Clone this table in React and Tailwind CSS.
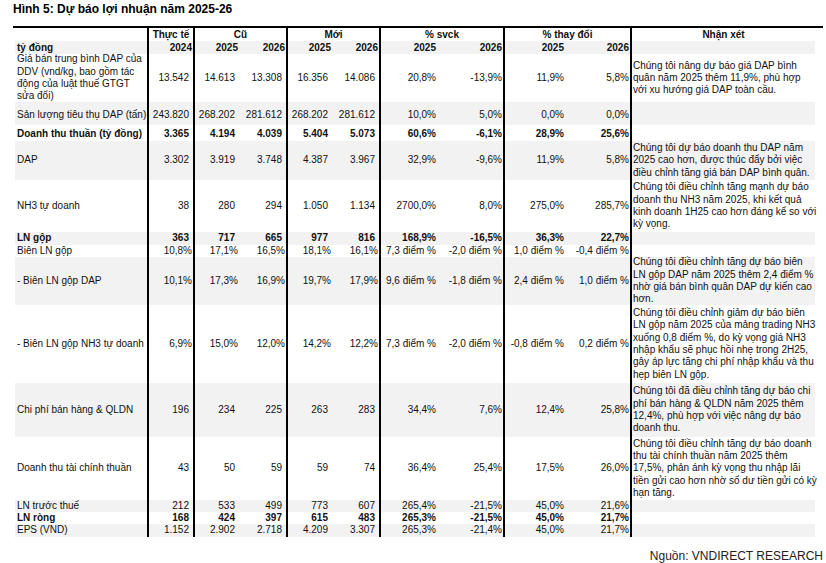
import React from "react";

const cols =
  "grid grid-cols-[132px_46px_46px_47px_46px_47px_58px_66px_62px_65px_185px]";

// columns that start with a thick rule
const ruled = [0, 1, 3, 5, 7];

const rows = [
  {
    label: ["Giá bán trung bình DAP của", "DDV (vnd/kg, bao gồm tác", "động của luật thuế GTGT", "sửa đổi)"],
    v: ["13.542", "14.613", "13.308", "16.356", "14.086", "20,8%", "-13,9%", "11,9%", "5,8%"],
    c: ["Chúng tôi nâng dự báo giá DAP bình", "quân năm 2025 thêm 11,9%, phù hợp", "với xu hướng giá DAP toàn cầu."],
    h: "h-[48px]",
  },
  {
    label: ["Sản lượng tiêu thụ DAP (tấn)"],
    v: ["243.820", "268.202", "281.612", "268.202", "281.612", "10,0%", "5,0%", "0,0%", "0,0%"],
    h: "h-[23px] pt-[4px]",
    gray: true,
  },
  {
    label: ["Doanh thu thuần (tỷ đồng)"],
    v: ["3.365", "4.194", "4.039", "5.404", "5.073", "60,6%", "-6,1%", "28,9%", "25,6%"],
    h: "h-[16px] pt-[3px]",
    bold: true,
  },
  {
    label: ["DAP"],
    v: ["3.302", "3.919", "3.748", "4.387", "3.967", "32,9%", "-9,6%", "11,9%", "5,8%"],
    c: ["Chúng tôi dự báo doanh thu DAP năm", "2025 cao hơn, được thúc đẩy bởi việc", "điều chỉnh tăng giá bán DAP bình quân."],
    h: "h-[39px]",
    gray: true,
  },
  {
    label: ["NH3 tự doanh"],
    v: ["38", "280", "294", "1.050", "1.134", "2700,0%", "8,0%", "275,0%", "285,7%"],
    c: ["Chúng tôi điều chỉnh tăng mạnh dự báo", "doanh thu NH3 năm 2025, khi kết quả", "kinh doanh 1H25 cao hơn đáng kể so với", "kỳ vọng."],
    h: "h-[52px]",
  },
  {
    label: ["LN gộp"],
    v: ["363", "717", "665", "977", "816", "168,9%", "-16,5%", "36,3%", "22,7%"],
    h: "h-[13px]",
    gray: true,
    bold: true,
  },
  {
    label: ["Biên LN gộp"],
    v: ["10,8%", "17,1%", "16,5%", "18,1%", "16,1%", "7,3 điểm %", "-2,0 điểm %", "1,0 điểm %", "-0,4 điểm %"],
    h: "h-[12px]",
  },
  {
    label: ["- Biên LN gộp DAP"],
    v: ["10,1%", "17,3%", "16,9%", "19,7%", "17,9%", "9,6 điểm %", "-1,8 điểm %", "2,4 điểm %", "1,0 điểm %"],
    c: ["Chúng tôi điều chỉnh tăng dự báo biên", "LN gộp DAP năm 2025 thêm 2,4 điểm %", "nhờ giá bán bình quân DAP dự kiến cao", "hơn."],
    h: "h-[48px]",
    gray: true,
  },
  {
    label: ["- Biên LN gộp NH3 tự doanh"],
    v: ["6,9%", "15,0%", "12,0%", "14,2%", "12,2%", "7,3 điểm %", "-2,0 điểm %", "-0,8 điểm %", "0,2 điểm %"],
    c: [
      "Chúng tôi điều chỉnh giảm dự báo biên",
      "LN gộp năm 2025 của mảng trading NH3",
      "xuống 0,8 điểm %, do kỳ vọng giá NH3",
      "nhập khẩu sẽ phục hồi nhẹ trong 2H25,",
      "gây áp lực tăng chi phí nhập khẩu và thu",
      "hẹp biên LN gộp.",
    ],
    h: "h-[78px]",
  },
  {
    label: ["Chi phí bán hàng & QLDN"],
    v: ["196", "234", "225", "263", "283", "34,4%", "7,6%", "12,4%", "25,8%"],
    c: ["Chúng tôi đã điều chỉnh tăng dự báo chi", "phí bán hàng & QLDN năm 2025 thêm", "12,4%, phù hợp với việc nâng dự báo", "doanh thu."],
    h: "h-[54px]",
    gray: true,
  },
  {
    label: ["Doanh thu tài chính thuần"],
    v: ["43", "50", "59", "59", "74", "36,4%", "25,4%", "17,5%", "26,0%"],
    c: ["Chúng tôi điều chỉnh tăng dự báo doanh", "thu tài chính thuần năm 2025 thêm", "17,5%, phản ánh kỳ vọng thu nhập lãi", "tiền gửi cao hơn nhờ số dư tiền gửi có kỳ", "hạn tăng."],
    h: "h-[63px]",
  },
  {
    label: ["LN trước thuế"],
    v: ["212", "533", "499", "773", "607", "265,4%", "-21,5%", "45,0%", "21,6%"],
    h: "h-[12px]",
    gray: true,
  },
  {
    label: ["LN ròng"],
    v: ["168", "424", "397", "615", "483", "265,3%", "-21,5%", "45,0%", "21,7%"],
    h: "h-[12px]",
    bold: true,
  },
  {
    label: ["EPS (VND)"],
    v: ["1.152", "2.902", "2.718", "4.209", "3.307", "265,3%", "-21,4%", "45,0%", "21,7%"],
    h: "h-[13px]",
    gray: true,
  },
];

function Lines({ items }) {
  return (
    <div className="leading-[12.3px]">
      {items.map((t, i) => (
        <div key={i} className="whitespace-nowrap">
          {t}
        </div>
      ))}
    </div>
  );
}

function Row({ row }) {
  return (
    <div className={`${cols} ${row.gray ? "bg-[#f2f2f2]" : ""} ${row.bold ? "font-bold" : ""}`}>
      <div className={`flex items-center pl-[2px] ${row.h}`}>
        <Lines items={row.label} />
      </div>
      {row.v.map((val, i) => (
        <div
          key={i}
          className={`flex items-center justify-end whitespace-nowrap leading-[12.3px] ${row.h} ${
            ruled.includes(i) ? "border-l-2 border-black" : ""
          } ${val.endsWith("%") ? "pr-[1px]" : "pr-[4px]"}`}
        >
          {val}
        </div>
      ))}
      <div className={`flex items-center border-l-2 border-black pl-[1px] ${row.h}`}>
        {row.c && <Lines items={row.c} />}
      </div>
    </div>
  );
}

export default function App() {
  return (
    <div className="min-h-[563px] w-[826px] bg-white pt-[2px] text-[10px] text-[#111] font-['Liberation_Sans',Arial,sans-serif]">
      <div className="h-[14px] pl-[13px] text-[12px] font-bold leading-[14px] text-black">
        Hình 5: Dự báo lợi nhuận năm 2025-26
      </div>
      <div className="ml-[13px] mt-[10px] h-[2px] w-[810px] bg-black" />

      <div className="ml-[15px] w-[800px]">
        {/* header */}
        <div className={`${cols} font-bold leading-[13px]`}>
          <div className="h-[13px]" />
          <div className="flex h-[13px] items-center justify-center border-l-2 border-black">Thực tế</div>
          <div className="col-span-2 flex h-[13px] items-center justify-center border-l-2 border-black">Cũ</div>
          <div className="col-span-2 flex h-[13px] items-center justify-center border-l-2 border-black">Mới</div>
          <div className="col-span-2 flex h-[13px] items-center justify-center border-l-2 border-black">% svck</div>
          <div className="col-span-2 flex h-[13px] items-center justify-center border-l-2 border-black">% thay đổi</div>
          <div className="flex h-[13px] items-center justify-center border-l-2 border-black">Nhận xét</div>
        </div>
        <div className={`${cols} bg-[#f2f2f2] font-bold leading-[13px]`}>
          <div className="flex h-[13px] items-center pl-[2px]">tỷ đồng</div>
          {["2024", "2025", "2026", "2025", "2026", "2025", "2026", "2025", "2026"].map((y, i) => (
            <div
              key={i}
              className={`flex h-[13px] items-center justify-end pr-[1px] ${
                ruled.includes(i) ? "border-l-2 border-black" : ""
              }`}
            >
              {y}
            </div>
          ))}
          <div className="h-[13px] border-l-2 border-black" />
        </div>

        {rows.map((r, i) => (
          <Row key={i} row={r} />
        ))}
      </div>

      <div className="mt-[12px] pr-[3px] text-right text-[12px] leading-[14px] text-[#222]">
        Nguồn: VNDIRECT RESEARCH
      </div>
    </div>
  );
}
